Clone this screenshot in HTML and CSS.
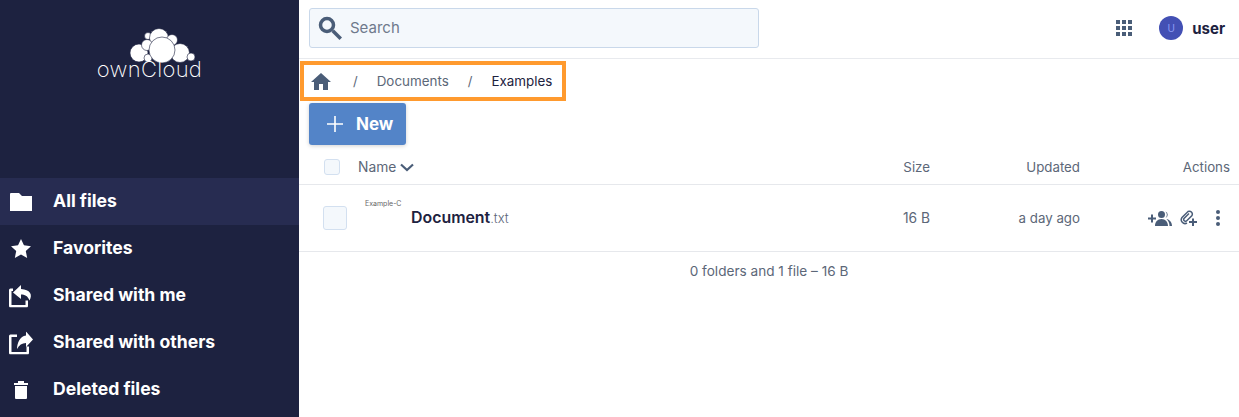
FILE: index.html
```html
<!DOCTYPE html>
<html lang="en">
<head>
  <meta charset="UTF-8">
  <title>Files - ownCloud</title>
  <link rel="stylesheet" href="styles.css">
</head>
<body>

  <div class="sidebar">
    <div class="logo">
      <svg class="logo-cloud" viewBox="130 27 66 37" width="66" height="37">
        <circle cx="148" cy="36" r="3.500"/>
        <circle cx="159" cy="38" r="9.500"/>
        <circle cx="172" cy="40" r="5.500"/>
        <circle cx="139" cy="53" r="9"/>
        <circle cx="147" cy="45" r="5.500"/>
        <circle cx="180" cy="53" r="9.500"/>
        <circle cx="191" cy="57" r="4"/>
        <circle cx="148" cy="58" r="4"/>
        <circle cx="162" cy="50" r="13"/>
      </svg>
      <div class="logo-text">ownCloud</div>
    </div>
    <div class="nav-item active">
      <svg viewBox="0 0 22 18" width="22" height="18"><path d="M0 1a1 1 0 0 1 1-1h8l3 3h10v15H0z"/></svg>
      <span>All files</span>
    </div>
    <div class="nav-item">
      <svg viewBox="0 0 24 24" width="21" height="21"><path d="M12 18.260l-7.053 3.948 1.575-7.928L.587 8.792l8.027-.952L12 .5l3.386 7.340 8.027.952-5.935 5.488 1.575 7.928z"/></svg>
      <span>Favorites</span>
    </div>
    <div class="nav-item">
      <svg viewBox="0 0 24 23" width="24" height="23"><path d="M4 4v2.500H2.500v14h14V16H19v5.500a1.500 1.500 0 0 1-1.500 1.500h-16A1.500 1.500 0 0 1 0 21.500v-16A1.500 1.500 0 0 1 1.500 4zM12 .5L4 8l8 6.500V10c3.500 0 7 1.500 8.500 6 3.500-6 .5-11-8.500-11.500z"/></svg>
      <span>Shared with me</span>
    </div>
    <div class="nav-item">
      <svg viewBox="0 0 24 23" width="24" height="23"><path d="M8 3v2.500H2.500v15h15V15H20v6.500a1.500 1.500 0 0 1-1.500 1.500h-17A1.500 1.500 0 0 1 0 21.500v-17A1.500 1.500 0 0 1 1.500 3zM17 0l7 8-7 7.500v-4c-4 0-7 2-9 6 0-6 3-13 9-13.500z"/></svg>
      <span>Shared with others</span>
    </div>
    <div class="nav-item">
      <svg viewBox="0 0 14 18" width="14" height="18"><path d="M1 5h12v12a1 1 0 0 1-1 1H2a1 1 0 0 1-1-1zM0 2h4V0h6v2h4v2H0z"/></svg>
      <span>Deleted files</span>
    </div>
  </div>

  <div class="main">
    <div class="topbar">
      <div class="search">
        <svg viewBox="0 0 24 24" width="24" height="24"><circle cx="9" cy="9" r="6.500" fill="none" stroke="#4a5d78" stroke-width="3.500"/><path d="M13.500 16l2.500-2.500 8 8-2.500 2.500z"/></svg>
        <span>Search</span>
      </div>
      <div class="top-right">
        <svg class="apps" viewBox="0 0 16 16" width="16" height="16">
          <rect x="0" y="0" width="4" height="4"/><rect x="6" y="0" width="4" height="4"/><rect x="12" y="0" width="4" height="4"/>
          <rect x="0" y="6" width="4" height="4"/><rect x="6" y="6" width="4" height="4"/><rect x="12" y="6" width="4" height="4"/>
          <rect x="0" y="12" width="4" height="4"/><rect x="6" y="12" width="4" height="4"/><rect x="12" y="12" width="4" height="4"/>
        </svg>
        <div class="avatar">U</div>
        <div class="username">user</div>
      </div>
    </div>

    <div class="breadcrumb">
      <svg viewBox="2 3 20 17" width="20" height="17"><path d="M10 20v-6h4v6h5v-8h3L12 3 2 12h3v8z"/></svg>
      <span class="sep">/</span>
      <span class="crumb">Documents</span>
      <span class="sep">/</span>
      <span class="crumb current">Examples</span>
    </div>

    <div class="new-btn">
      <svg viewBox="0 0 16 16" width="16" height="16"><path d="M7.200 0h1.600v7.200H16v1.600H8.800V16H7.200V8.800H0V7.200h7.200z"/></svg>
      <span>New</span>
    </div>

    <div class="row head">
      <div class="check small"></div>
      <div class="col-name">
        Name
        <svg viewBox="0 0 14 9" width="14" height="9"><path d="M1 1.500l6 5.500 6-5.500" fill="none" stroke="#4a5d78" stroke-width="2.200"/></svg>
      </div>
      <div class="col-size">Size</div>
      <div class="col-updated">Updated</div>
      <div class="col-actions">Actions</div>
    </div>

    <div class="row file">
      <div class="check"></div>
      <div class="thumb">Example-C</div>
      <div class="col-name"><b>Document</b><span class="ext">.txt</span></div>
      <div class="col-size">16 B</div>
      <div class="col-updated">a day ago</div>
      <div class="col-actions">
        <svg viewBox="0 0 24 15" width="24" height="15"><path d="M0 6.500h3v-3h2v3h3v2H5v3H3v-3H0zM13.500 7a3.500 3.500 0 1 0 0-7 3.500 3.500 0 0 0 0 7zM7 15c0-4 2.500-7 6.500-7s6.500 3 6.500 7zM17.500.500a3.500 3.500 0 0 1 0 6.500 5 5 0 0 0 0-6.500zM18.500 8c3 .5 5.500 3 5.500 7h-2.500c0-3-1-5-3-7z"/></svg>
        <svg class="link" viewBox="0 0 18 16" width="18" height="16"><path d="M9 3.500L4 8.500a1.800 1.800 0 0 0 2.500 2.500L12 5.500a3 3 0 0 0-4-4L2 7.500a3.800 3.800 0 0 0 5 5.500" fill="none" stroke="#4a5d78" stroke-width="1.500"/><path d="M12 8.500h2v2.500h3v2h-3v3h-2v-3h-3v-2h3z"/></svg>
        <svg class="dots" viewBox="0 0 6 16" width="6" height="16"><circle cx="3" cy="2" r="2"/><circle cx="3" cy="8" r="2"/><circle cx="3" cy="14" r="2"/></svg>
      </div>
    </div>

    <div class="summary">0 folders and 1 file – 16 B</div>
  </div>

</body>
</html>
```

FILE: styles.css
```css
body {
  margin: 0;
  height: 417px;
  overflow: hidden;
  display: flex;
  background-color: #fff;
  color: #5c6778;
  font-family: Inter, "Liberation Sans", sans-serif;
  font-size: 13.3px;
}

.sidebar {
  width: 299px;
  flex-shrink: 0;
  background-color: #1d2240;
  color: white;
}

.logo {
  height: 178px;
  display: flex;
  flex-direction: column;
  align-items: center;
  padding-top: 27px;
  box-sizing: border-box;
}

.logo-cloud {
  display: block;
  margin-left: 26px;
}

.logo-cloud circle {
  fill: #fff;
  stroke: #1d2240;
  stroke-width: .6;
}

.logo-text {
  margin-top: -6px;
  font-weight: 250;
  font-size: 22px;
  line-height: 22px;
  letter-spacing: .3px;
}

.nav-item {
  height: 47px;
  position: relative;
  display: flex;
  align-items: center;
  padding: 0 0 2px 53px;
  font-size: 17.6px;
  font-weight: 700;
  box-sizing: border-box;
}

.nav-item.active {
  background-color: #272c51;
}

.nav-item svg {
  position: absolute;
  left: 21px;
  top: 50%;
  transform: translate(-50%, -50%);
  fill: white;
}

.main {
  flex: 1;
  min-width: 0;
}

.main svg {
  fill: #4a5d78;
}

.topbar {
  height: 59px;
  box-sizing: border-box;
  border-bottom: 1px solid #e8eaee;
  padding: 8px 14px 0 10px;
  display: flex;
  justify-content: space-between;
  align-items: flex-start;
}

.search {
  width: 450px;
  height: 40px;
  box-sizing: border-box;
  background-color: #f4f8fc;
  border: 1px solid #c9d8ea;
  border-radius: 3px;
  display: flex;
  align-items: center;
  gap: 8px;
  padding: 0 0 1px 8px;
  font-size: 15px;
  color: #6f7a8c;
}

.top-right {
  display: flex;
  align-items: center;
  height: 40px;
}

.apps {
  margin-right: 27px;
}

.avatar {
  width: 24px;
  height: 24px;
  border-radius: 50%;
  background-color: #4350b4;
  color: #8c9bf5;
  font-size: 10px;
  line-height: 24px;
  text-align: center;
  margin-right: 9px;
}

.username {
  font-size: 15px;
  font-weight: 700;
  color: #1d2240;
}

.breadcrumb {
  width: fit-content;
  height: 40px;
  box-sizing: border-box;
  margin: 2px 0 2px 1px;
  border: 4px solid #ff9a2e;
  padding: 0 10px 1px 7px;
  display: flex;
  align-items: center;
  font-size: 13.4px;
}

.breadcrumb svg {
  margin-bottom: -1px;
}

.breadcrumb .sep {
  margin: 0 19px 0 22px;
  font-size: 13px;
}

.crumb + .sep {
  margin-left: 19px;
}

.crumb.current {
  color: #1d2240;
}

.new-btn {
  width: 97px;
  height: 42px;
  margin-left: 10px;
  box-sizing: border-box;
  background-color: #5384c8;
  border-radius: 3px;
  box-shadow: 0 1px 4px rgba(0, 0, 0, .18);
  color: white;
  display: flex;
  align-items: center;
  gap: 13px;
  padding-left: 18px;
  font-size: 17px;
  font-weight: 700;
}

.main .new-btn svg {
  fill: white;
}

.row {
  display: flex;
  align-items: center;
  border-bottom: 1px solid #e6e8ec;
  box-sizing: border-box;
  padding-right: 9px;
}

.head {
  height: 35px;
  margin-top: 5px;
}

.file {
  height: 67px;
}

.check {
  width: 24px;
  height: 24px;
  margin-left: 24px;
  box-sizing: border-box;
  background-color: #f4f8fc;
  border: 1px solid #d3e0f0;
  border-radius: 3px;
}

.check.small {
  width: 16px;
  height: 16px;
  margin-left: 25px;
  margin-right: 18px;
}

.col-name {
  flex: 1;
  display: flex;
  align-items: center;
  gap: 4px;
  font-size: 13.8px;
}

.col-size {
  width: 60px;
  text-align: right;
}

.col-updated {
  width: 150px;
  text-align: right;
}

.col-actions {
  width: 150px;
  display: flex;
  justify-content: flex-end;
  align-items: center;
}

.file .col-actions {
  padding-right: 9px;
  box-sizing: border-box;
}

.file .col-size {
  font-size: 13.8px;
}

.link {
  margin: 0 17px 0 8px;
}

.thumb {
  width: 36px;
  height: 50px;
  margin: 0 10px 0 18px;
  white-space: nowrap;
  font-size: 7px;
  color: #666;
  padding-top: 6px;
  box-sizing: border-box;
}

.file .col-name {
  gap: 0;
  padding-bottom: 2px;
}

.file b {
  font-size: 15.9px;
  color: #1d2240;
  font-weight: 600;
}

.ext {
  font-size: 13px;
  font-weight: 300;
  margin-top: 2px;
}

.summary {
  text-align: center;
  margin-top: 11px;
  font-size: 13.6px;
}
```
